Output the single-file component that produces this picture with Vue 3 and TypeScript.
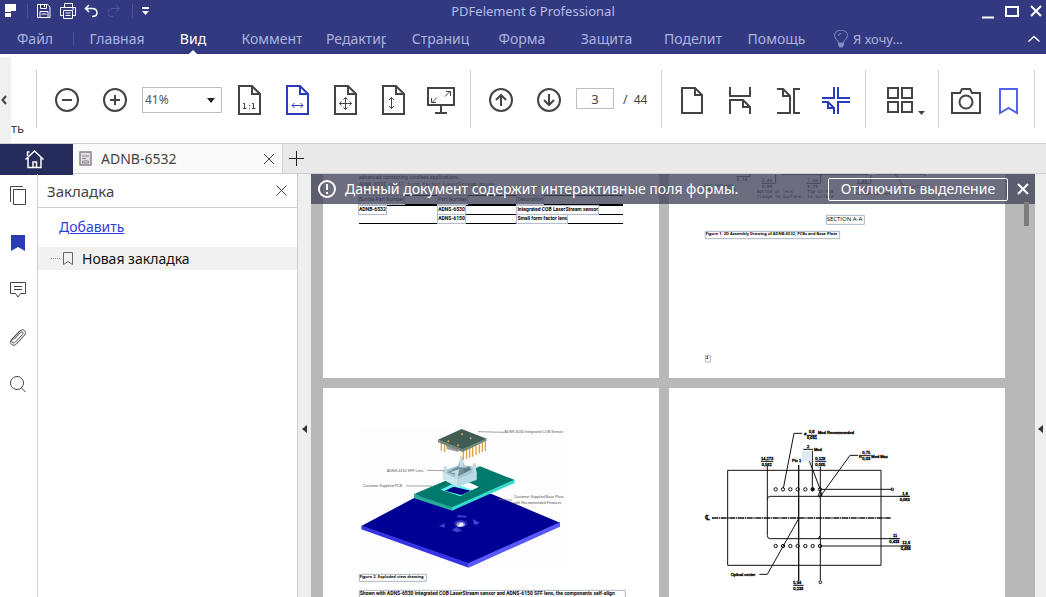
<script setup lang="ts">
import { ref } from 'vue'

interface MenuItem { label: string; clipped?: boolean }

const menu: MenuItem[] = [
  { label: 'Главная' },
  { label: 'Вид' },
  { label: 'Коммент', clipped: true },
  { label: 'Редактир', clipped: true },
  { label: 'Страниц', clipped: true },
  { label: 'Форма' },
  { label: 'Защита' },
  { label: 'Поделит', clipped: true },
  { label: 'Помощь' },
]
const active = ref('Вид')
const zoom = ref('41%')
const page = ref('3')

const parts = [
  ['ADNB-6532', 'ADNS-6530', 'Integrated COB LaserStream sensor'],
  ['', 'ADNS-6150', 'Small form factor lens'],
]
const padsX = [257, 279, 301, 323, 346, 368, 390]
</script>

<template>
  <div class="app">
    <header class="top">
      <div class="titlebar">
        <div class="quick">
          <svg class="logo" width="12" height="14" viewBox="0 0 12 14"><path d="M0 0h11v7H6v1H0zM0 9h6v4H0z" fill="#fff" /></svg>
          <i class="vline"></i>
          <button class="q" aria-label="Сохранить">
            <svg width="16" height="16" viewBox="0 0 16 16"><path d="M1.500 1.500h10l2.500 2.500v10.500H1.500zM4.500 1.500v4h6v-4M4 14.500v-6h8v6M8.500 2v2M5.500 11h5" /></svg>
          </button>
          <button class="q" aria-label="Печать">
            <svg width="16" height="16" viewBox="0 0 16 16"><path d="M4.500 4V.500h8V4M3.500 12.500h-3v-8h15v8h-3M3.500 7.500h9v8h-9zM5.500 10h5M5.500 12.500h5M12 6h2" /></svg>
          </button>
          <button class="q" aria-label="Отменить">
            <svg width="16" height="16" viewBox="0 0 16 16"><path d="M5 2L1.500 5.500L5 9M1.500 5.500H8c3 0 5 1.500 5 4.500s-2 3.500-5 3.500" stroke-width="1.500" /></svg>
          </button>
          <button class="q dim" aria-label="Повторить">
            <svg width="16" height="16" viewBox="0 0 16 16"><path d="M8 2l3.500 3.500L8 9M11.500 5.500H5c-3 0-5 1.500-5 4.500s2 3.500 5 3.500" /></svg>
          </button>
          <i class="vline"></i>
          <button class="q last" aria-label="Настроить">
            <svg width="16" height="16" viewBox="0 0 16 16"><path d="M0 4h7v2H0zM0 8h7l-3.500 4z" fill="#fff" stroke="none" /></svg>
          </button>
        </div>
        <div class="title">PDFelement 6 Professional</div>
        <div class="wins">
          <button aria-label="Свернуть"><svg width="16" height="16" viewBox="0 0 16 16"><path d="M3 14.500h12" stroke-width="2" /></svg></button>
          <button aria-label="Развернуть"><svg width="16" height="16" viewBox="0 0 16 16"><path d="M3 4h12v9H3z" stroke-width="2" /></svg></button>
          <button aria-label="Закрыть"><svg width="16" height="16" viewBox="0 0 16 16"><path d="M4 3l10 10M14 3L4 13" stroke-width="2" /></svg></button>
        </div>
      </div>
      <nav class="menu">
        <button class="m file">Файл</button>
        <button
          v-for="m in menu" :key="m.label" class="m" :class="{ on: m.label === active }"
          @click="active = m.label"
        ><span :class="{ clipped: m.clipped }">{{ m.label }}</span></button>
        <button class="m wish">
          <svg width="16" height="18" viewBox="0 0 16 18"><path d="M5.500 13c0-3-4-3.500-4-7.500a6.500 5.500 0 0 1 13 0c0 4-4 4.500-4 7.500zM5.500 6c0-1.500 1-2.500 2.500-2.500" /><path d="M5 13h6v2l-1.500 2.500h-3L5 15z" fill="#7f8dc4" stroke="none" /></svg>
          Я хочу...
        </button>
        <button class="m up" aria-label="Свернуть ленту">
          <svg width="14" height="10" viewBox="0 0 14 10"><path d="M1.500 7.500L7 2.500l5.500 5" stroke-width="1.500" /></svg>
        </button>
      </nav>
    </header>

    <div class="ribbon">
      <button class="slide" aria-label="Прокрутить влево"><svg width="8" height="10" viewBox="0 0 8 10"><path d="M6 1L2.500 5L6 9" /></svg></button>
      <span class="cut">ть</span>
      <i class="sep"></i>
      <div class="group">
        <button class="t" aria-label="Уменьшить"><svg viewBox="0 0 36 36"><circle cx="18" cy="18" r="11" /><path d="M13 18h10" /></svg></button>
        <button class="t" aria-label="Увеличить"><svg viewBox="0 0 36 36"><circle cx="18" cy="18" r="11" /><path d="M13 18h10M18 13v10" /></svg></button>
        <label class="combo">
          <select v-model="zoom" aria-label="Масштаб"><option>41%</option><option>100%</option></select>
          <svg width="8" height="5" viewBox="0 0 8 5"><path d="M0 0h8L4 5z" /></svg>
        </label>
        <button class="t" aria-label="Реальный размер"><svg viewBox="0 0 36 36"><path d="M8 4h13l8 8v20H8zM21 4v8h8" /><path class="thin" d="M12 21.500h1.500v5M12 26.500h3.500M18.500 23v1M18.500 25.500v1M21 21.500h1.500v5M21 26.500h3.500" /></svg></button>
        <button class="t blue" aria-label="По ширине"><svg viewBox="0 0 36 36"><path d="M8 4h13l8 8v20H8zM21 4v8h8" /><path class="thin" d="M13 23.500h11M15.500 21l-2.500 2.500l2.500 2.500M21.500 21l2.500 2.500l-2.500 2.500" /></svg></button>
        <button class="t" aria-label="Страница целиком"><svg viewBox="0 0 36 36"><path d="M8 4h13l8 8v20H8zM21 4v8h8" /><path class="thin" d="M12.500 21.500h12M18.500 15.500v12M14.500 19.500l-2 2l2 2M22.500 19.500l2 2l-2 2M16.500 17.500l2-2l2 2M16.500 25.500l2 2l2-2" /></svg></button>
        <button class="t" aria-label="По высоте"><svg viewBox="0 0 36 36"><path d="M8 4h13l8 8v20H8zM21 4v8h8" /><path class="thin" d="M16.500 15.500v11M14 18l2.500-2.500L19 18M14 24l2.500 2.500L19 24" /></svg></button>
        <button class="t" aria-label="Полный экран"><svg viewBox="0 0 36 36"><path d="M5 6h26v17H5zM18 23v8M12 31h12" /><path class="thin" d="M9 20.500l5-5M8.500 16v4.500H13M22 14.500l5-5M23 9.500h4.500V14" /></svg></button>
      </div>
      <i class="sep"></i>
      <div class="group nav">
        <button class="t" aria-label="Предыдущая"><svg viewBox="0 0 36 36"><circle cx="18" cy="18" r="11" /><path d="M18 24V13M13 18l5-5l5 5" /></svg></button>
        <button class="t" aria-label="Следующая"><svg viewBox="0 0 36 36"><circle cx="18" cy="18" r="11" /><path d="M18 12v11M13 18l5 5l5-5" /></svg></button>
        <input v-model="page" class="page-no" aria-label="Страница">
        <span class="total">/&nbsp; 44</span>
      </div>
      <i class="sep"></i>
      <div class="group">
        <button class="t" aria-label="Одна страница"><svg viewBox="0 0 36 36"><path d="M8 6h13l7 7v18H8zM21 6v7h7" /></svg></button>
        <button class="t" aria-label="Непрерывно"><svg viewBox="0 0 36 36"><path d="M8 5v9h20V5M8 32V18h13l7 7v7M21 18v7h7" /></svg></button>
        <button class="t" aria-label="Две страницы"><svg viewBox="0 0 36 36"><path d="M7 7h6l7 7v17H7M13 7v7h7M30 7h-6v24h6" /></svg></button>
        <button class="t blue" aria-label="Две страницы непрерывно"><svg viewBox="0 0 36 36"><path d="M4 16h12V5M32 16H20V5M32 20H20v12M4 20h6l6 6v6M10 20v6h6" /></svg></button>
      </div>
      <i class="sep"></i>
      <div class="group tiles">
        <button class="t" aria-label="Плитка"><svg class="wide" viewBox="0 0 48 36"><path d="M6 6h10v10H6zM20 6h10v10H20zM6 20h10v10H6zM20 20h10v10H20z" /><path d="M36 29h7l-3.500 4z" class="solid" /></svg></button>
      </div>
      <i class="sep"></i>
      <div class="group tail">
        <button class="t" aria-label="Снимок"><svg viewBox="0 0 36 36"><path d="M4 11h8l2-4h8l2 4h8v20H4z" /><circle cx="18" cy="20" r="6.500" /></svg></button>
        <button class="t mark" aria-label="Закладки"><svg viewBox="0 0 36 36"><path d="M10 7h17v24l-8.500-5L10 31z" /></svg></button>
      </div>
      <i class="sep"></i>
    </div>

    <div class="tabs">
      <button class="home" aria-label="Домой">
        <svg width="20" height="20" viewBox="0 0 20 20"><path d="M.500 10.500L9.500 2l9 8.500M3 9v9.500h13V9M2.500 7V3h2M8 18v-5h3.500v5" /></svg>
      </button>
      <div class="tab">
        <svg width="13" height="15" viewBox="0 0 13 15"><path d="M1 1h11v13H1z" fill="#e2dce3" stroke="#8c858e" stroke-width="1.500" /><path d="M3 5h7M3 7.500h4M3.500 10h6v2h-6z" fill="none" stroke="#8c858e" /></svg>
        <span>ADNB-6532</span>
        <button aria-label="Закрыть вкладку"><svg width="12" height="12" viewBox="0 0 12 12"><path d="M1 1l10 10M11 1L1 11" /></svg></button>
      </div>
      <button class="add" aria-label="Новая вкладка"><svg width="16" height="16" viewBox="0 0 16 16"><path d="M7.500 0v15M0 7.500h15" /></svg></button>
    </div>

    <main class="work">
      <div class="rail">
        <button aria-label="Страницы"><svg viewBox="0 0 18 20"><path d="M1.500 16V.500H14M4.500 3.500h12v15h-12z" /></svg></button>
        <button aria-label="Закладки"><svg viewBox="0 0 18 20"><path d="M2 2h14v16l-7-4l-7 4z" fill="#2b3cb8" stroke="none" /></svg></button>
        <button aria-label="Комментарии"><svg viewBox="0 0 18 20"><path d="M1.500 2.500h15v11h-5L9 17l-2.500-3.500h-5zM5 6.500h8M5 9.500h8" /></svg></button>
        <button aria-label="Вложения"><svg viewBox="0 0 18 20"><path d="M5 12.500l6.500-7c1.500-1.500 3.500 0 2 2l-7 7.500c-2.500 2.500-5-.500-3-3L11 4c3-3 7.500.500 4.500 4L7.500 17c-3 3-8 0-5-4.500l8.500-9" /></svg></button>
        <button aria-label="Поиск"><svg viewBox="0 0 18 20"><circle cx="8" cy="9" r="6.500" /><path d="M12.500 14l4 4" /></svg></button>
      </div>

      <aside class="panel">
        <div class="phead">
          <h2>Закладка</h2>
          <button aria-label="Закрыть панель"><svg width="11" height="11" viewBox="0 0 11 11"><path d="M.500.500l10 10M10.500.500l-10 10" /></svg></button>
        </div>
        <div class="addrow"><a href="#">Добавить</a></div>
        <div class="node">
          <i class="dots"></i>
          <svg width="10" height="13" viewBox="0 0 10 13"><path d="M.500.500h9v12L5 9.500l-4.500 3z" /></svg>
          <span>Новая закладка</span>
        </div>
      </aside>

      <button class="grip" aria-label="Скрыть панель"><svg width="5" height="8" viewBox="0 0 5 8"><path d="M5 0v8L0 4z" /></svg></button>

      <section class="doc">
        <div class="pages">
          <article class="page first">
            <div class="para">advanced containing cordless applications.</div>
            <div class="para mono">ADNB-6532 small form factor LaserStream mouse</div>
            <div class="para mono">bundle set</div>
            <table>
              <thead><tr><th><span>Bundle Part Number</span></th><th><span>Part Number</span></th><th><span>Description</span></th></tr></thead>
              <tbody>
                <tr v-for="(r, i) in parts" :key="i"><td v-for="(c, j) in r" :key="j"><span v-if="c">{{ c }}</span></td></tr>
              </tbody>
            </table>
          </article>

          <svg class="page" viewBox="27 12 1008 612">
            <g class="ink">
              <path d="M228 20h42M270 12v8M305 40h42V14M440 40h42V14M590 40h42V14M365 14h260M650 12h145v8M705 12l25 36h16" />
              <text x="230" y="34">0,10</text><text x="305" y="36">2,40</text><text x="305" y="54">0,09</text>
              <text x="442" y="36">7,40</text><text x="442" y="54">0,29</text><text x="590" y="38">7,89</text><text x="590" y="56">0,31</text>
              <text x="133" y="50">Gap between</text><text x="133" y="64">Lens and PCB</text>
              <text x="290" y="70">Bottom of lens</text><text x="290" y="84">flange to surface</text>
              <text x="442" y="70">Top of PCB</text><text x="442" y="84">to surface</text>
              <text x="746" y="53">Surface</text><text x="585" y="74">to PCB surface</text>
            </g>
            <path class="field" d="M499 136h114v27H499zM136 184h403v22H136z" />
            <text x="500" y="152" class="sec">SECTION A-A</text>
            <text x="137" y="195" class="cap">Figure 1. 2D Assembly Drawing of ADNB-6532, PCBs and Base Plate</text>
            <path class="field" d="M136 556h15v20H136z" />
            <text x="138" y="568" class="cap">2</text>
          </svg>

          <svg class="page" viewBox="-81 -96 1008 627">
            <path d="M27 27h628v416H27z" fill="#fdfdfd" />
            <path d="M34 318L215 222L425 222L630 308L356 431z" fill="#000095" />
            <path d="M34 317L356 429v14L34 328z" fill="#3434e6" />
            <path d="M356 429L630 307v13L356 443z" fill="#5858ff" />
            <path d="M192 222L390 139L494 180L306 263z" fill="#007a6c" />
            <path d="M192 222L306 262v10L192 235z" fill="#27aa98" />
            <path d="M306 262L494 179v10L306 272z" fill="#35ddc8" />
            <path d="M272 209L318 187L385 202L331 229z" fill="#5ff5ed" />
            <path d="M285 212L311 200L362 212L333 225z" fill="#000084" />
            <path d="M330 196l24-10l32 14l-20 10z" fill="#fff" />
            <path d="M268 197l52-21M338 224l60-24" stroke="#004e46" stroke-width="3" stroke-dasharray="4 5" />
            <path d="M279 152L323 137l10-26l11 25l34 6l2 38l-60 20l-41-22z" fill="#a9c5d5" />
            <path d="M279 156l43 21v23l-43-21z" fill="#c9e7ec" />
            <path d="M322 177l58-24v25l-58 23z" fill="#b8dce5" />
            <path d="M292 157l30-17l43 8l-38 20z" fill="#71929f" />
            <path d="M300 157l27-9l-2 14zM281 139h9v23h-9zM315 155h9v21h-9zM368 130h10v25h-10zM330 109h9v31h-9z" fill="#c4dbe6" />
            <path d="M340 146l18-7l5 10l-22 9z" fill="#597e88" />
            <path d="M274 65v27M284 69v27M340 90v31M350 87v29M359 84v29M368 80v30M378 77v28M388 74v26M397 69v27M406 65v28" stroke="#dfa33e" stroke-width="4" />
            <path d="M288 70l37 8v18l-35-9z" fill="#a09ba0" />
            <path d="M264 59L335 27L410 56L338 89z" fill="#3f5d52" />
            <path d="M264 59L338 87l72-31v6L338 96L264 67z" fill="#71877a" />
            <circle v-for="p in [[336, 43], [362, 55], [324, 76], [295, 64]]" :key="p[0]" :cx="p[0]" :cy="p[1]" r="3" fill="#e0a24c" />
            <ellipse cx="332" cy="311" rx="20" ry="11" fill="#2828bd" />
            <ellipse cx="332" cy="313" rx="13" ry="8" fill="#8f8fcb" />
            <path d="M322 318q9 5 19-3q-3-8-9-6z" fill="#f4f4fa" />
            <path d="M320 292l5-6l22 1l4 6l-14-1zM369 297l20 11l-13 8l-6-7zM266 319l18-10v14zM306 331l13-11l17 12l-17 5z" fill="#4040ce" />
            <path d="M384 35l78 2M231 151l52 1M168 198h78M444 239l42 1" stroke="#777" stroke-width="2" />
            <g class="label">
              <text x="463" y="40">ADNS-6530 Integrated COB Sensor</text>
              <text x="111" y="155">ADNS-6150 SFF Lens</text>
              <text x="38" y="202">Customer Supplied PCB</text>
              <text x="491" y="235">Customer Supplied Base Plate</text>
              <text x="491" y="252">with Recommended Features</text>
            </g>
            <path class="field" d="M28 463h201v21H28zM28 511h798v30H28z" />
            <text x="29" y="474" class="cap">Figure 2. Exploded view drawing</text>
            <text x="29" y="525" class="body">Shown with ADNS-6530 integrated COB LaserStream sensor and ADNS-6150 SFF lens, the components self-align</text>
          </svg>

          <svg class="page" viewBox="-63 -66 1008 627">
            <g class="plan">
              <path d="M113 181h460v285H113zM232 168v209q0 9 9 9h388M232 268q0-9 9-9h418M391 170v342M391 238h216M391 408h270M367 122v116M355 145l36 94M280 235L312 70h24M389 262L480 136h24M327 324L232 493h-24" />
              <path d="M326 165v348" stroke-width="4" />
              <path d="M66 324h536" stroke-width="4" stroke-dasharray="18 2 4 2" />
              <path d="M213 154h37M375 154h34M350 76h31M340 118h29M515 137h27M629 259h31M598 386h31M632 408h31M310 526h31M384 259l7-18l5 16zM389 378q0 8-8 8" />
              <circle v-for="x in padsX" :key="'a' + x" :cx="x" cy="238" r="5" />
              <circle v-for="x in padsX" :key="'b' + x" :cx="x" cy="408" r="5" />
              <circle cx="607" cy="238" r="4" /><circle cx="391" cy="517" r="4" />
              <circle cx="368" cy="238" r="4" fill="#000" />
              <path d="M336 122h29v32h-29z" fill="#e2e8f2" stroke="none" />
            </g>
            <g class="dim-text">
              <text x="342" y="74">ø</text><text x="357" y="68">0,8</text><text x="351" y="88">0,031</text><text x="384" y="73">Mod Recommended</text>
              <text x="351" y="113">2</text><text x="372" y="122">Mod</text><text x="306" y="155">Pin 1</text>
              <text x="213" y="150">14,273</text><text x="215" y="168">0,562</text>
              <text x="376" y="150">0,129</text><text x="376" y="168">0,005</text>
              <text x="507" y="144">R</text><text x="517" y="133">0,75</text><text x="517" y="151">0,03</text><text x="544" y="143">Mod Max</text>
              <text x="637" y="255">1,6</text><text x="629" y="274">0,063</text>
              <text x="609" y="382">11</text><text x="598" y="400">0,433</text><text x="637" y="402">12,6</text><text x="632" y="421">0,496</text>
              <text x="122" y="497">Optical center</text><text x="310" y="522">5,94</text><text x="310" y="541">0,233</text>
              <text x="46" y="331" class="cl">℄</text>
            </g>
          </svg>
        </div>

        <div class="notice" role="alert">
          <svg width="20" height="20" viewBox="0 0 20 20"><circle cx="10" cy="10" r="8" /><path d="M10 5v6M10 13v2" /></svg>
          <span>Данный документ содержит интерактивные поля формы.</span>
          <button class="off">Отключить выделение</button>
          <button class="x" aria-label="Закрыть"><svg width="12" height="12" viewBox="0 0 12 12"><path d="M1 1l10 10M11 1L1 11" /></svg></button>
        </div>
        <i class="thumb"></i>
      </section>

      <button class="grip right" aria-label="Показать панель"><svg width="5" height="8" viewBox="0 0 5 8"><path d="M5 0v8L0 4z" /></svg></button>
    </main>
  </div>
</template>

<style>
html, body { margin: 0; overflow: hidden; }
</style>

<style scoped>
* { box-sizing: border-box; }
.app {
  display: flex; flex-direction: column; height: 100vh; overflow: hidden;
  background: #fff; color: #444; font: 14px/20px "Noto Sans", "Open Sans", sans-serif;
}
button { margin: 0; padding: 0; border: 0; background: none; font: inherit; color: inherit; display: flex; align-items: center; justify-content: center; flex: none; }
svg { display: block; flex: none; fill: none; stroke: currentColor; }
i { display: block; flex: none; }

.top { background: #323980; color: #a9b4de; }
.titlebar { display: grid; grid-template-columns: 1fr auto 1fr; align-items: center; height: 22px; }
.quick { display: flex; align-items: center; padding-left: 5px; color: #fff; }
.logo { stroke: none; }
.vline { width: 1px; height: 14px; margin: 0 8px 0 10px; background: #4a5299; }
.q { width: 16px; margin-right: 8px; }
.q + .vline { margin: 0 9px 0 0; }
.dim { color: #4f58a0; }
.title { padding-left: 20px; font-size: 13px; color: #b3bde3; }
.wins { display: flex; justify-content: flex-end; gap: 8px; padding-right: 3px; color: #fff; }
.menu { display: grid; grid-template-columns: 74px 86px 66px 91px 78px 91px 72px 97px 76px 91px auto 1fr; height: 32px; align-items: stretch; }
.m { position: relative; height: 34px; align-self: center; white-space: nowrap; }
.file { padding-right: 4px; }
.file::after { content: ""; position: absolute; right: 0; top: 10px; width: 1px; height: 14px; background: #4a5299; }
.clipped { max-width: 60px; overflow: hidden; }
.m.on { color: #fff; }
.m.on::after { content: ""; position: absolute; bottom: 1px; left: 50%; margin-left: -5px; border: 5px solid transparent; border-top: 0; border-bottom-color: #fff; }
.wish { gap: 4px; padding-left: 11px; font-size: 13px; }
.wish svg { stroke: #7f8dc4; }
.up { justify-self: end; padding-right: 5px; color: #fff; }

.ribbon { display: flex; align-items: center; height: 89px; flex: none; background: #fff; color: #444; }
.slide { align-self: flex-end; width: 11px; height: 86px; padding-right: 3px; background: #f0f0f0; }
.slide svg { stroke-width: 2; }
.cut { align-self: flex-end; width: 25px; height: 25px; overflow: hidden; font-size: 13px; }
.sep { width: 1px; height: 58px; background: #cfcfcf; }
.group { display: flex; align-items: center; padding: 3px 5px 0 6px; }
.t { width: 48px; }
.t svg { width: 36px; height: 36px; stroke-width: 2; }
.t svg.wide { width: 48px; }
.t svg .thin { stroke-width: 1; }
.solid { fill: #444; stroke: none; }
.blue { color: #2b3cb8; }
.mark { color: #5560f0; }
.combo { display: flex; align-items: center; position: relative; width: 80px; height: 26px; margin: 0 3px; border: 1px solid #bdbdbd; }
.combo select { width: 100%; height: 24px; padding: 0 3px 0 2px; appearance: none; border: 0; background: none; color: #555; font: inherit; font-size: 12px; }
.combo svg { position: absolute; right: 6px; top: 10px; fill: #222; stroke: none; pointer-events: none; }
.nav { padding-right: 13px; }
.page-no { width: 38px; height: 21px; margin: 0 9px 3px 3px; padding: 0; border: 1px solid #bdbdbd; text-align: center; color: #444; font: inherit; font-size: 13px; }
.total { width: 25px; font-size: 12px; white-space: nowrap; }
.tiles { padding: 3px 8px 0 16px; }
.tail .t { width: 42px; }

.tabs { display: flex; flex: none; height: 31px; background: #e9e9e9; border-top: 1px solid #d2d2d2; border-bottom: 1px solid #cfcfcf; }
.home { width: 73px; height: 31px; padding: 0 3px 2px 0; background: #252c5c; color: #fff; }
.home svg { stroke-width: 1.500; }
.tab { display: flex; align-items: center; gap: 9px; width: 210px; padding: 0 7px 0 6px; background: #fafafa; border-right: 1px solid #cfcfcf; }
.tab span { flex: 1; }
.add { width: 27px; color: #222; }

.work { display: flex; flex: 1; min-height: 0; }
.rail { display: flex; flex-direction: column; gap: 23px; width: 38px; flex: none; padding-top: 10px; border-right: 1px solid #cfcfcf; }
.rail button { height: 24px; padding-right: 1px; }
.rail svg { width: 18px; height: 20px; }
.panel { width: 260px; flex: none; border-right: 1px solid #cfcfcf; }
.phead { display: flex; align-items: center; justify-content: space-between; height: 34px; padding: 0 10px 0 9px; border-bottom: 1px solid #cfcfcf; }
h2 { margin: 0; font-size: 15px; font-weight: 400; }
.addrow { padding: 9px 21px; height: 39px; }
.addrow a { color: #3040e0; }
.node { display: flex; align-items: center; height: 23px; padding-left: 13px; background: #f1f1f1; color: #111; }
.node svg { stroke: #666; margin-right: 9px; }
.dots { width: 9px; margin-right: 3px; border-top: 1px dotted #999; }
.grip { width: 13px; padding-top: 86px; background: #efefef; color: #333; }
.grip svg { fill: currentColor; stroke: none; }
.right { width: 11px; }

.doc { position: relative; flex: 1; min-width: 0; overflow: hidden; background: #b8b8b8; }
.pages { display: grid; grid-template-columns: 1fr 1fr; gap: 10px; padding: 0 30px 0 12px; }
.page { width: 100%; background: #fff; stroke: none; }
.first { padding: 0 36px; overflow: hidden; color: #000; font: 5px/7px "Noto Sans", sans-serif; }
.para { height: 7px; white-space: nowrap; }
.mono { font-family: "DejaVu Sans Mono", monospace; }
table { width: 100%; margin-top: 0; border-collapse: collapse; table-layout: fixed; border-top: 1px solid #000; }
th, td { height: 9px; padding: 0; text-align: left; vertical-align: top; font: 700 5px/7px Roboto, sans-serif; white-space: nowrap; }
th:nth-child(-n+2) { width: 30%; }
th { font-weight: 400; }
thead tr { border-bottom: 2px solid #000; }
td:not(:first-child), tbody tr:last-child td { border-bottom: 1px solid #000; }
th span, td span { display: block; width: max-content; height: 8px; outline: 1px solid #b4bccb; }
.ink path { stroke: #000; stroke-width: 2; }
.ink text { fill: #000; font: 13px "DejaVu Sans Mono", monospace; }
.field { stroke: #abb5c5; stroke-width: 3; }
.sec { fill: #000; font: 18px "Open Sans", sans-serif; }
.cap { fill: #000; font: 700 12px "Open Sans", sans-serif; }
.body { fill: #000; font: 700 15px Roboto, sans-serif; }
.label text { fill: #555; font: 11px "Liberation Sans", sans-serif; }
.plan { stroke: #111; stroke-width: 3; }
.dim-text text { fill: #000; stroke: #000; stroke-width: 1; font: 12px "Liberation Sans", sans-serif; }
.dim-text .cl { font: 22px "DejaVu Sans", sans-serif; }

.notice { position: absolute; inset: 0 0 auto 0; display: flex; align-items: center; height: 30px; padding: 0 6px; background: rgba(68, 68, 92, .78); color: #fff; font-size: 14px; white-space: nowrap; }
.notice svg { stroke-width: 2; }
.notice span { flex: 1; margin-left: 8px; }
.off { width: 180px; height: 23px; border: 1px solid #fff; border-radius: 2px; }
.x { width: 12px; margin-left: 9px; }
.thumb { position: absolute; right: 6px; top: 28px; width: 5px; height: 24px; background: #7d7d7d; }
</style>
